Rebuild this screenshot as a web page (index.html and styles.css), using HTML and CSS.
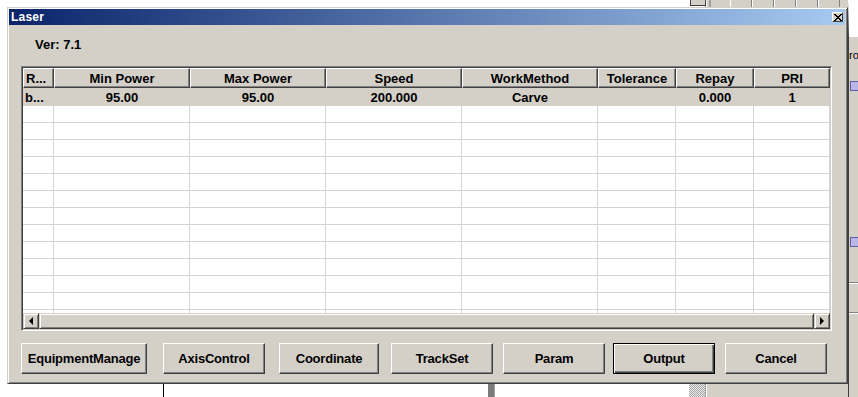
FILE: index.html
```html
<!DOCTYPE html>
<html>
<head>
    <title>Laser</title>
    <meta charset="UTF-8">
    <link rel="stylesheet" href="styles.css">
</head>
<body>
    <div class="desktop">
        <!-- bits of the application behind the dialog -->
        <div class="bg-panel"></div>
        <div class="bg-app-right">
            <span class="bg-label">ro</span>
            <span class="bg-icon bg-icon-a"></span>
            <span class="bg-icon bg-icon-b"></span>
            <span class="bg-rule bg-rule-a"></span>
            <span class="bg-rule bg-rule-b"></span>
        </div>
        <div class="bg-top">
            <span class="bg-min"></span>
            <span class="bg-sep"></span>
            <span class="bg-tool"></span>
            <span class="bg-tool"></span>
            <span class="bg-tool"></span>
            <span class="bg-tool"></span>
            <span class="bg-tool"></span>
        </div>
        <span class="bg-vline"></span>
        <span class="bg-vbar"></span>
        <span class="bg-checker"></span>

        <div class="window">
            <div class="titlebar">
                <span class="title">Laser</span>
                <span class="close-btn">
                    <svg width="8" height="7" viewBox="0 0 8 7">
                        <path d="M0 0h2v1h1v1h2v-1h1v-1h2v1h-1v1h-1v1h-1v1h1v1h1v1h1v1h-2v-1h-1v-1h-2v1h-1v1h-2v-1h1v-1h1v-1h1v-1h-1v-1h-1v-1h-1z" fill="#000"/>
                    </svg>
                </span>
            </div>

            <div class="client">
                <div class="version">Ver: 7.1</div>

                <div class="grid">
                    <div class="grid-body">
                        <table class="params">
                            <colgroup>
                                <col style="width:31px">
                                <col style="width:136px">
                                <col style="width:136px">
                                <col style="width:136px">
                                <col style="width:136px">
                                <col style="width:78px">
                                <col style="width:78px">
                                <col style="width:76px">
                            </colgroup>
                            <thead>
                                <tr>
                                    <th class="first">R...</th>
                                    <th>Min Power</th>
                                    <th>Max Power</th>
                                    <th>Speed</th>
                                    <th>WorkMethod</th>
                                    <th>Tolerance</th>
                                    <th>Repay</th>
                                    <th>PRI</th>
                                </tr>
                            </thead>
                            <tbody id="rows">
                                <tr class="selected">
                                    <td class="first">b...</td>
                                    <td>95.00</td>
                                    <td>95.00</td>
                                    <td>200.000</td>
                                    <td>Carve</td>
                                    <td></td>
                                    <td>0.000</td>
                                    <td>1</td>
                                </tr>
                            </tbody>
                        </table>
                    </div>
                    <div class="hscroll">
                        <span class="sb-btn"><span class="arrow-left"></span></span>
                        <span class="sb-thumb"></span>
                        <span class="sb-btn"><span class="arrow-right"></span></span>
                    </div>
                </div>

                <div class="buttons">
                    <button class="btn wide">EquipmentManage</button>
                    <button class="btn">AxisControl</button>
                    <button class="btn narrow">Coordinate</button>
                    <button class="btn">TrackSet</button>
                    <button class="btn">Param</button>
                    <button class="btn default">Output</button>
                    <button class="btn">Cancel</button>
                </div>
            </div>
        </div>
    </div>

    <script>
        // empty grid rows below the one parameter row
        var body = document.getElementById('rows');
        for (var i = 0; i < 13; i++) {
            var tr = document.createElement('tr');
            tr.className = 'empty';
            for (var c = 0; c < 8; c++) {
                tr.appendChild(document.createElement('td'));
            }
            body.appendChild(tr);
        }
    </script>
</body>
</html>
```

FILE: styles.css
```css
html, body {
    margin: 0;
    padding: 0;
    background: #fff;
}
body {
    font-family: "Liberation Sans", Arial, sans-serif;
    font-size: 13px;
    font-weight: bold;
    color: #000;
}
.desktop {
    position: relative;
    width: 858px;
    height: 397px;
    overflow: hidden;
    padding: 7px 0 0 7px;
    box-sizing: border-box;
}

/* background application */
.bg-panel {
    position: absolute;
    left: 705px;
    top: 0;
    width: 153px;
    height: 397px;
    background: #d4d0c8;
    border-left: 1px solid #a0a0a0;
    box-shadow: inset 1px 0 #fff;
}
.bg-app-right {
    position: absolute;
    left: 848px;
    top: 0;
    width: 10px;
    height: 397px;
    background: #d4d0c8;
    border-top: 37px solid #fff;
    border-left: 1px solid #404040;
    box-sizing: border-box;
    overflow: hidden;
}
.bg-label {
    position: absolute;
    left: 0;
    top: 12px;
    font-size: 11px;
    font-weight: normal;
}
.bg-icon {
    position: absolute;
    left: 1px;
    width: 8px;
    height: 8px;
    background: #b8b8e8;
    border: 1px solid #6060a0;
}
.bg-icon-a { top: 44px; }
.bg-icon-b { top: 200px; }
.bg-rule {
    position: absolute;
    left: 0;
    width: 10px;
    height: 1px;
    background: #fff;
    border-top: 1px solid #808080;
}
.bg-rule-a { top: 245px; }
.bg-rule-b { top: 275px; }
.bg-top {
    position: absolute;
    left: 690px;
    top: 0;
    height: 8px;
    display: flex;
    align-items: flex-start;
}
.bg-min {
    width: 14px;
    height: 5px;
    border: 1px solid #404040;
    border-top: none;
    background: #d4d0c8;
}
.bg-sep {
    width: 2px;
    height: 8px;
    margin-left: 3px;
    margin-right: 19px;
    background: #a0a0a0;
}
.bg-tool {
    width: 20px;
    height: 7px;
    border-right: 1px solid #808080;
    border-left: 1px solid #fff;
    background: #d4d0c8;
}
.bg-vline {
    position: absolute;
    left: 163px;
    top: 384px;
    width: 1px;
    height: 13px;
    background: #000;
}
.bg-vbar {
    position: absolute;
    left: 488px;
    top: 384px;
    width: 6px;
    height: 13px;
    background: #7c7c7c;
    border-right: 1px solid #a0a0a0;
}
.bg-checker {
    position: absolute;
    left: 689px;
    top: 384px;
    width: 16px;
    height: 13px;
    background: repeating-conic-gradient(#a8a8a8 0 25%, #e8e8e8 0 50%) 0 0 / 2px 2px;
}

/* dialog window */
.window {
    position: relative;
    width: 841px;
    height: 377px;
    box-sizing: border-box;
    background: #d4d0c8;
    border: 1px solid;
    border-color: #d4d0c8 #404040 #404040 #d4d0c8;
    box-shadow: inset 1px 1px #fff, inset -1px -1px #808080;
    padding: 1px;
}
.titlebar {
    height: 16px;
    display: flex;
    align-items: center;
    padding: 0 2px 0 2px;
    background: linear-gradient(to right, #0a246a, #a6caf0);
    margin-right: 1px;
}
.title {
    color: #fff;
    font-size: 12px;
    font-weight: bold;
    letter-spacing: 0.2px;
}
.close-btn {
    margin-left: auto;
    width: 11px;
    height: 10px;
    box-sizing: border-box;
    background: #d4d0c8;
    border: 1px solid;
    border-color: #fff #404040 #404040 #fff;
    display: flex;
    align-items: center;
    justify-content: center;
}
.close-btn svg {
    display: block;
}
.client {
    padding: 12px 0 0 12px;
}
.version {
    height: 16px;
    line-height: 16px;
    padding-left: 14px;
}

/* parameter grid */
.grid {
    margin-top: 13px;
    width: 811px;
    height: 265px;
    box-sizing: border-box;
    border: 1px solid;
    border-color: #808080 #fff #fff #808080;
    box-shadow: inset 1px 1px #404040, inset -1px -1px #d4d0c8;
    padding: 1px;
    background: #fff;
}
.grid-body {
    height: 245px;
    overflow: hidden;
}
.params {
    width: 807px;
    table-layout: fixed;
    border-collapse: separate;
    border-spacing: 0;
}
.params th {
    height: 18px;
    padding: 0;
    background: #d4d0c8;
    border: 1px solid;
    border-color: #fff #404040 #404040 #fff;
    box-shadow: inset -1px -1px #808080;
    text-align: center;
    white-space: nowrap;
    overflow: hidden;
    font-weight: bold;
}
.params td {
    padding: 0;
    text-align: center;
    white-space: nowrap;
    overflow: hidden;
}
.params .first {
    text-align: left;
    padding-left: 2px;
}
.params tr.selected td {
    height: 18px;
    background: #d4d0c8;
}
.params tr.empty td {
    height: 16px;
    border-right: 1px solid #d4d4d4;
    border-bottom: 1px solid #d4d4d4;
}

/* horizontal scroll bar */
.hscroll {
    height: 16px;
    display: flex;
    background: #d4d0c8;
}
.sb-btn, .sb-thumb {
    box-sizing: border-box;
    border: 1px solid;
    border-color: #d4d0c8 #404040 #404040 #d4d0c8;
    box-shadow: inset 1px 1px #fff, inset -1px -1px #808080;
    background: #d4d0c8;
}
.sb-btn {
    width: 16px;
    display: flex;
    align-items: center;
    justify-content: center;
}
.sb-thumb {
    flex: 1;
}
.arrow-left, .arrow-right {
    width: 0;
    height: 0;
    border-top: 4px solid transparent;
    border-bottom: 4px solid transparent;
}
.arrow-left {
    border-right: 4px solid #000;
}
.arrow-right {
    border-left: 4px solid #000;
}

/* dialog buttons */
.buttons {
    margin-top: 12px;
    display: grid;
    grid-template-columns: 142px 116px 112px 112px 110px 112px 102px;
    justify-items: start;
}
.btn {
    width: 102px;
    height: 31px;
    box-sizing: border-box;
    padding: 0;
    font-family: "Liberation Sans", Arial, sans-serif;
    font-size: 13px;
    font-weight: bold;
    letter-spacing: -0.2px;
    color: #000;
    background: #d4d0c8;
    border: 1px solid;
    border-color: #fff #404040 #404040 #fff;
    box-shadow: inset -1px -1px #808080;
    cursor: pointer;
}
.btn.wide {
    width: 126px;
}
.btn.narrow {
    width: 100px;
}
.btn.default {
    border-color: #000;
    box-shadow: inset 1px 1px #fff, inset -1px -1px #404040, inset -2px -2px #808080;
}
```
